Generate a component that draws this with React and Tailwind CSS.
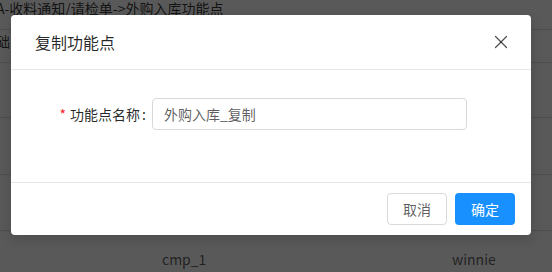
import { X } from "lucide-react";

const font = { fontFamily: '"Noto Sans CJK SC", "Noto Sans", sans-serif' };

function BackgroundPage() {
  return (
    <div className="w-[552px] h-[272px] bg-white text-black/65 text-[14px] overflow-hidden" style={font}>
      <div className="h-[30px] border-b border-[#dcdcdc] flex items-start -ml-[4px] leading-[16px] text-black/80 whitespace-nowrap">
        A-收料通知/请检单-&gt;外购入库功能点
      </div>
      <div className="h-[33px] border-b border-[#dcdcdc] flex items-start pt-[1px] -ml-[18px] text-black/80 whitespace-nowrap">
        基础
      </div>
      <div className="h-[55px] border-b border-[#dcdcdc]" />
      <div className="h-[57px] border-b border-[#dcdcdc]" />
      <div className="h-[56px] border-b border-[#dcdcdc]" />
      <div className="h-[56px] flex items-center">
        <div className="w-[162px]" />
        <div className="w-[290px]">cmp_1</div>
        <div>winnie</div>
      </div>
    </div>
  );
}

export default function App() {
  return (
    <div className="relative w-[552px] h-[272px] overflow-hidden">
      <BackgroundPage />
      <div className="absolute inset-0 bg-black/65" />
      <div
        className="absolute left-[11px] top-[15px] w-[520px] bg-white rounded-[4px] shadow-[0_4px_12px_rgba(0,0,0,0.15)]"
        style={font}
      >
        <div className="h-[55px] px-[24px] flex items-center justify-between border-b border-[#e8e8e8]">
          <span className="text-[16px] text-black/85 font-normal">复制功能点</span>
          <X size={22} strokeWidth={1.3} className="text-black/70 -mr-[5px]" />
        </div>
        <div className="pt-[28px] pb-[52px] px-[24px] flex items-center">
          <div className="w-[117px] flex items-center justify-end pr-[6px] text-[14px] text-black/85">
            <span className="text-[#f5222d] mr-[4px] text-[14px] leading-none">*</span>
            <span>功能点名称</span>
            <span className="ml-[2px]">:</span>
          </div>
          <div className="w-[315px] h-[32px] border border-[#d9d9d9] rounded-[4px] px-[11px] flex items-center text-[14px] text-black/65">
            外购入库_复制
          </div>
        </div>
        <div className="h-[53px] border-t border-[#e8e8e8] px-[16px] flex items-center justify-end gap-[8px]">
          <button className="h-[32px] px-[15px] border border-[#d9d9d9] rounded-[4px] text-[14px] text-black/65 bg-white">
            取消
          </button>
          <button className="h-[32px] px-[16px] rounded-[4px] text-[14px] text-white bg-[#1890ff]">
            确定
          </button>
        </div>
      </div>
    </div>
  );
}
